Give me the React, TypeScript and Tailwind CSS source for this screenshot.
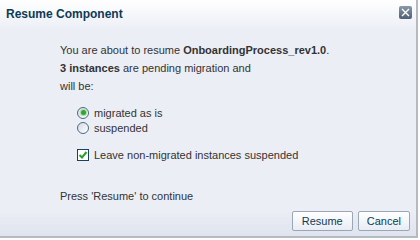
import React from 'react';

const font = { fontFamily: '"Liberation Sans", Arial, sans-serif' };

const Radio: React.FC<{ checked?: boolean; label: string }> = ({ checked, label }) => (
  <label className="flex items-center h-[15px] gap-[5px]">
    <span className="w-[12px] h-[12px] rounded-full border border-[#4a6a86] bg-gradient-to-br from-[#d3dae4] to-[#ffffff] flex items-center justify-center">
      {checked && <span className="w-[5px] h-[5px] rounded-full bg-[#2fa82f] ring-1 ring-[#a8dca8]" />}
    </span>
    <span>{label}</span>
  </label>
);

const App: React.FC = () => {
  return (
    <div className="w-[420px] h-[240px] bg-white text-[11px] text-[#333333]" style={font}>
      <div className="w-[418px] h-[238px] flex flex-col border-r-2 border-b-2 border-[#b5b9c0] bg-[#ebeef5] relative">
        <div className="h-[30px] shrink-0 bg-gradient-to-b from-[#ffffff] to-[#ebeef5] pl-[6px] pt-[6px] leading-[16px]">
          <span className="text-[12px] font-bold text-[#0d3a56]">Resume Component</span>
        </div>
        <button className="absolute right-[4px] top-[6px] w-[13px] h-[13px] rounded-[2px] bg-gradient-to-b from-[#8a99ab] to-[#4f6075] flex items-center justify-center">
          <svg width="9" height="9" viewBox="0 0 9 9">
            <path d="M1 1 L8 8 M8 1 L1 8" stroke="#ffffff" strokeWidth="1.4" />
          </svg>
        </button>
        <div className="flex-1 pl-[60px] pt-[11px] leading-[18px]">
          <div>
            You are about to resume <b>OnboardingProcess_rev1.0</b>.
          </div>
          <div>
            <b>3 instances</b> are pending migration and
          </div>
          <div>will be:</div>
          <div className="pl-[17px] mt-[10px] flex flex-col">
            <Radio checked label="migrated as is" />
            <Radio label="suspended" />
          </div>
          <label className="pl-[17px] mt-[12px] flex items-center gap-[5px] h-[15px]">
            <span className="w-[12px] h-[12px] border border-[#1c3f62] bg-white flex items-center justify-center">
              <svg width="10" height="10" viewBox="0 0 10 10">
                <path d="M1.5 5 L4 7.5 L8.5 2" stroke="#27a02a" strokeWidth="2" fill="none" />
              </svg>
            </span>
            <span>Leave non-migrated instances suspended</span>
          </label>
          <div className="mt-[25px]">Press 'Resume' to continue</div>
        </div>
        <div className="flex justify-end gap-[5px] pr-[6px] pb-[5px] bg-gradient-to-b from-[#ebeef5] to-[#dee3ed]">
          <button className="h-[20px] px-[9px] border border-[#9ba7b6] rounded-[2px] bg-gradient-to-b from-[#ffffff] to-[#e8edf4] text-[#0d3a56]">
            Resume
          </button>
          <button className="h-[20px] px-[8px] border border-[#9ba7b6] rounded-[2px] bg-gradient-to-b from-[#ffffff] to-[#e8edf4] text-[#0d3a56]">
            Cancel
          </button>
        </div>
      </div>
    </div>
  );
};

export default App;
